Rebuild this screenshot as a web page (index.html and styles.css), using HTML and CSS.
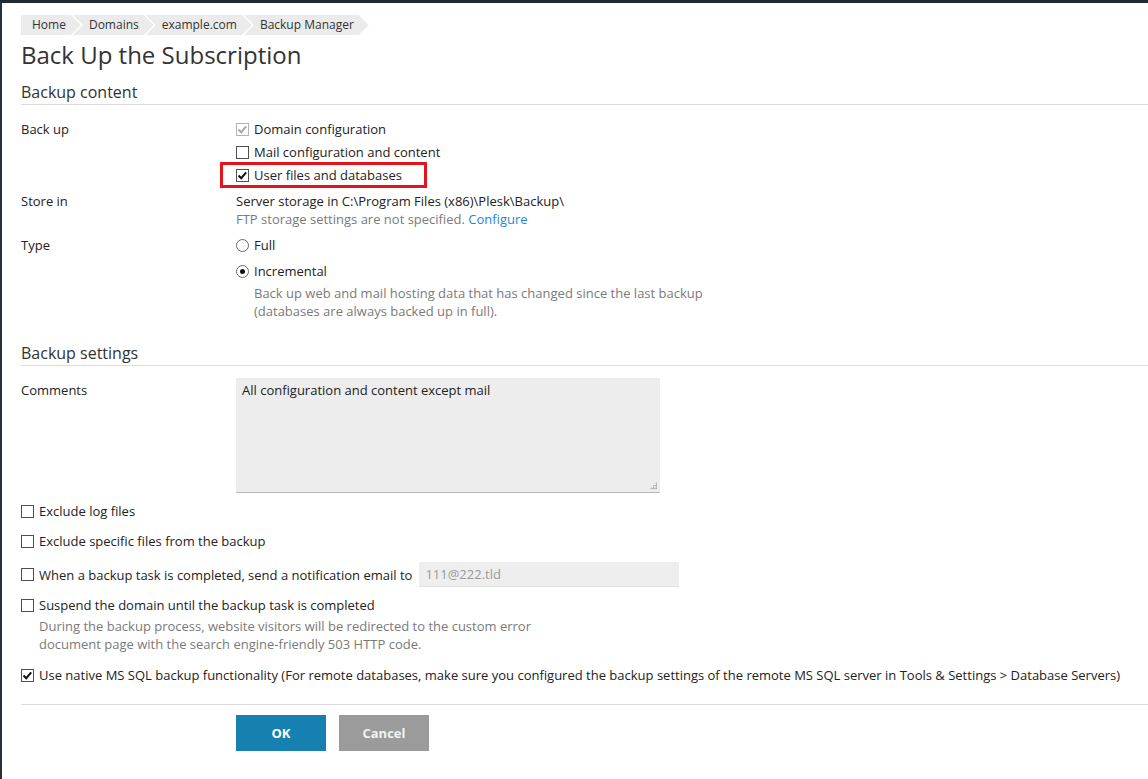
FILE: index.html
```html
<!DOCTYPE html>
<html lang="en">
<head>
<meta charset="utf-8">
<title>Back Up the Subscription</title>
<link rel="stylesheet" href="styles.css">
</head>
<body>
<div class="page">
  <ul class="crumbs">
    <li class="crumb">Home</li>
    <li class="crumb">Domains</li>
    <li class="crumb">example.com</li>
    <li class="crumb">Backup Manager</li>
  </ul>
  <h1 class="title">Back Up the Subscription</h1>

  <h2 class="section">Backup content</h2>

  <div class="row row-backup">
    <div class="label">Back up</div>
    <div class="field">
      <div class="opt"><span class="cb cb-disabled"><svg viewBox="0 0 13 13"><path d="M2.5 6.5 L5.2 9.2 L10.2 3.4"/></svg></span><span>Domain configuration</span></div>
      <div class="opt"><span class="cb"></span><span>Mail configuration and content</span></div>
      <div class="opt opt-highlight"><span class="cb cb-on"><svg viewBox="0 0 13 13"><path d="M2.5 6.5 L5.2 9.2 L10.2 3.4"/></svg></span><span>User files and databases</span><span class="highlight"></span></div>
    </div>
  </div>

  <div class="row row-gap">
    <div class="label">Store in</div>
    <div class="field">
      <div>Server storage in C:\Program Files (x86)\Plesk\Backup\</div>
      <div class="hint">FTP storage settings are not specified. <a class="link" href="#">Configure</a></div>
    </div>
  </div>

  <div class="row row-gap">
    <div class="label">Type</div>
    <div class="field">
      <div class="opt"><span class="rb"></span><span>Full</span></div>
      <div class="opt opt-radio"><span class="rb rb-on"></span><span>Incremental</span></div>
      <div class="hint hint-sub">Back up web and mail hosting data that has changed since the last backup<br>(databases are always backed up in full).</div>
    </div>
  </div>

  <h2 class="section section-2">Backup settings</h2>

  <div class="row row-comments">
    <div class="label label-comments">Comments</div>
    <div class="field">
      <div class="comments-wrap">
        <textarea class="comments" readonly>All configuration and content except mail</textarea>
      </div>
    </div>
  </div>

  <div class="check-row cr-log"><span class="cb"></span><span>Exclude log files</span></div>
  <div class="check-row cr-12"><span class="cb"></span><span>Exclude specific files from the backup</span></div>
  <div class="check-row cr-12"><span class="cb"></span><span>When a backup task is completed, send a notification email to</span><span class="email">111@222.tld</span></div>
  <div class="check-row cr-9"><span class="cb"></span><span>Suspend the domain until the backup task is completed</span></div>
  <div class="hint hint-suspend">During the backup process, website visitors will be redirected to the custom error<br>document page with the search engine-friendly 503 HTTP code.</div>
  <div class="check-row cr-13"><span class="cb cb-on"><svg viewBox="0 0 13 13"><path d="M2.5 6.5 L5.2 9.2 L10.2 3.4"/></svg></span><span>Use native MS SQL backup functionality (For remote databases, make sure you configured the backup settings of the remote MS SQL server in Tools &amp; Settings &gt; Database Servers)</span></div>

  <div class="divider"></div>

  <div class="buttons">
    <button class="btn btn-ok" type="button">OK</button>
    <button class="btn btn-cancel" type="button">Cancel</button>
  </div>
</div>
</body>
</html>
```

FILE: styles.css
```css
* { box-sizing: border-box; }

html, body {
  margin: 0;
  padding: 0;
  background: #ffffff;
}

body {
  font-family: "Open Sans", "Noto Sans", "DejaVu Sans", sans-serif;
  font-size: 13px;
  line-height: 18px;
  color: #222222;
}

.page {
  min-height: 779px;
  border-top: 3px solid #1f2b34;
  border-left: 2px solid #27323a;
  padding-left: 19px;
  padding-bottom: 20px;
}

/* Breadcrumbs */
.crumbs {
  list-style: none;
  margin: 12px 0 0;
  padding: 0;
  display: flex;
  height: 20px;
  font-size: 12px;
  line-height: 20px;
  color: #333333;
}

.crumb {
  background: #ebebeb;
  height: 20px;
  padding: 0 15px 0 16px;
  margin-left: -8px;
  clip-path: polygon(0 0, calc(100% - 10px) 0, 100% 50%, calc(100% - 10px) 100%, 0 100%, 10px 50%);
  white-space: nowrap;
}

.crumb:first-child {
  margin-left: 0;
  padding-left: 11px;
  clip-path: polygon(0 0, calc(100% - 10px) 0, 100% 50%, calc(100% - 10px) 100%, 0 100%);
}

/* Headings */
.title {
  margin: 5px 0 0;
  font-size: 24px;
  line-height: 30px;
  font-weight: 400;
  color: #333333;
}

.section {
  margin: 12px 0 0;
  padding-bottom: 2px;
  font-size: 16px;
  line-height: 20px;
  font-weight: 400;
  color: #333333;
  border-bottom: 1px solid #dcdcdc;
}

.section-2 {
  margin-top: 23px;
}

/* Form rows */
.row {
  display: grid;
  grid-template-columns: 215px 1fr;
}

.row-backup { margin-top: 15px; }
.row-gap { margin-top: 8px; }
.row-comments { margin-top: 12px; }

.label {
  color: #222222;
}

.label-comments {
  padding-top: 3px;
}

.field {
  display: flex;
  flex-direction: column;
  align-items: flex-start;
}

.opt {
  position: relative;
  display: flex;
  align-items: center;
  gap: 5px;
  height: 18px;
}

.opt + .opt { margin-top: 5px; }
.opt + .opt-radio { margin-top: 8px; }

.highlight {
  position: absolute;
  left: -16px;
  top: -4px;
  width: 207px;
  height: 26px;
  border: 3px solid #e3141c;
  pointer-events: none;
}

.hint {
  color: #7a7a7a;
}

.hint-sub {
  margin-top: 4px;
  padding-left: 18px;
}

.link {
  color: #1f87d2;
  text-decoration: none;
}

/* Checkbox & radio */
.cb {
  flex: none;
  width: 13px;
  height: 13px;
  border: 1px solid #505050;
  background: #ffffff;
  position: relative;
  display: inline-block;
}

.cb svg {
  position: absolute;
  left: -1px;
  top: -1px;
  width: 13px;
  height: 13px;
}

.cb svg path {
  fill: none;
  stroke: #111111;
  stroke-width: 2;
}

.cb-disabled {
  border-color: #b4b4b4;
}

.cb-disabled svg path {
  stroke: #a8a8a8;
}

.rb {
  flex: none;
  width: 13px;
  height: 13px;
  border: 1px solid #6a6a6a;
  border-radius: 50%;
  background: #ffffff;
  position: relative;
  display: inline-block;
}

.rb-on::after {
  content: "";
  position: absolute;
  left: 3px;
  top: 3px;
  width: 5px;
  height: 5px;
  border-radius: 50%;
  background: #111111;
}

/* Comments */
.comments-wrap {
  position: relative;
  width: 424px;
  height: 115px;
}

.comments-wrap::after {
  content: "";
  position: absolute;
  right: 3px;
  bottom: 4px;
  width: 7px;
  height: 7px;
  background-image: radial-gradient(circle, #a0a0a0 0.8px, transparent 1px);
  background-size: 2.5px 2.5px;
  clip-path: polygon(100% 0, 100% 100%, 0 100%);
  pointer-events: none;
}

.comments {
  display: block;
  width: 424px;
  height: 115px;
  margin: 0;
  padding: 3px 6px;
  border: none;
  border-bottom: 1px solid #b8b8b8;
  background: #ededed;
  font-family: inherit;
  font-size: 13px;
  line-height: 18px;
  color: #222222;
  resize: none;
  outline: none;
}

/* Checkbox rows */
.check-row {
  display: flex;
  align-items: center;
  gap: 5px;
  min-height: 18px;
}

.cr-log { margin-top: 9px; }
.cr-12 { margin-top: 12px; }
.cr-9 { margin-top: 9px; }
.cr-13 { margin-top: 13px; }

.email {
  margin-left: 2px;
  width: 260px;
  height: 25px;
  line-height: 25px;
  padding: 0 6px;
  background: #eeeeee;
  border-bottom: 1px solid #e2e2e2;
  color: #9a9a9a;
}

.hint-suspend {
  margin-top: 3px;
  padding-left: 18px;
}

.divider {
  margin-top: 20px;
  border-top: 1px solid #dcdcdc;
}

.buttons {
  margin-top: 10px;
  padding-left: 215px;
  display: flex;
  gap: 13px;
}

.btn {
  width: 90px;
  height: 36px;
  border: none;
  font-family: inherit;
  font-size: 13px;
  font-weight: 700;
  color: #ffffff;
  cursor: pointer;
}

.btn-ok {
  background: #1680b0;
}

.btn-cancel {
  background: #9b9b9b;
  color: #f2f2f2;
}
```
